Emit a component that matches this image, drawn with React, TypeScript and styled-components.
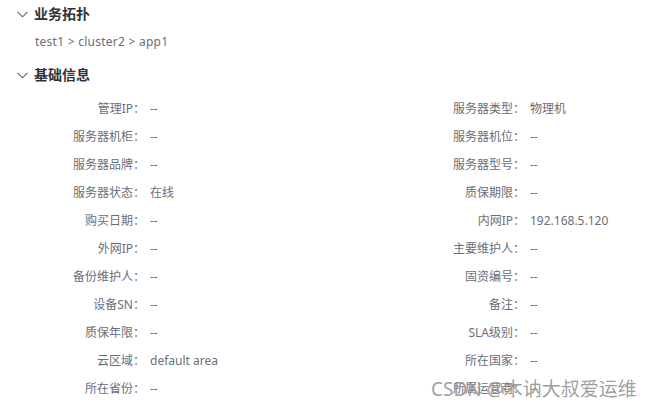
import styled, { createGlobalStyle } from 'styled-components';

const GlobalStyle = createGlobalStyle`
  html, body {
    margin: 0;
    padding: 0;
    background: #ffffff;
  }
  body {
    font-family: "Noto Sans", "Noto Sans CJK SC", sans-serif;
    font-size: 12px;
    color: #63656e;
  }
`;

const FONT_STACK = `"Noto Sans", "Noto Sans CJK SC", sans-serif`;

const Page = styled.div`
  position: relative;
  width: 658px;
  height: 407px;
  overflow: hidden;
  padding: 4px 0 0 17px;
  box-sizing: border-box;
`;

const SectionHeader = styled.div<{ $gap?: number }>`
  display: flex;
  align-items: center;
  gap: 6px;
  height: 20px;
  margin-top: ${(p) => p.$gap ?? 0}px;
  font-family: ${FONT_STACK};
  font-size: 14px;
  font-weight: 700;
  color: #313238;
  line-height: 20px;
`;

const Chevron = styled.svg`
  width: 11px;
  height: 7px;
  flex: none;
`;

const Breadcrumb = styled.div`
  margin-top: 8px;
  padding-left: 18px;
  height: 20px;
  line-height: 20px;
  font-size: 12px;
  letter-spacing: 0.25px;
  color: #6b6d76;
`;

const InfoGrid = styled.div`
  display: grid;
  grid-template-columns: 380px 1fr;
  grid-auto-rows: 28px;
  margin-top: 10px;
  margin-left: 3px;
`;

const Field = styled.div`
  display: flex;
  align-items: center;
  font-size: 12px;
  line-height: 16px;
`;

const Label = styled.span`
  width: 125px;
  flex: none;
  text-align: right;
  color: #6b6d76;
  white-space: nowrap;
`;

const Value = styled.span`
  padding-left: 5px;
  color: #6b6d76;
  white-space: nowrap;
`;

const Watermark = styled.div`
  position: absolute;
  left: 431px;
  top: 376px;
  font-family: ${FONT_STACK};
  font-size: 19px;
  line-height: 26px;
  color: rgba(120, 120, 120, 0.72);
  text-shadow: 0 0 1px rgba(255, 255, 255, 0.6);
  white-space: nowrap;
  pointer-events: none;
`;

const fields: [string, string][] = [
  ['管理IP', '--'],
  ['服务器类型', '物理机'],
  ['服务器机柜', '--'],
  ['服务器机位', '--'],
  ['服务器品牌', '--'],
  ['服务器型号', '--'],
  ['服务器状态', '在线'],
  ['质保期限', '--'],
  ['购买日期', '--'],
  ['内网IP', '192.168.5.120'],
  ['外网IP', '--'],
  ['主要维护人', '--'],
  ['备份维护人', '--'],
  ['固资编号', '--'],
  ['设备SN', '--'],
  ['备注', '--'],
  ['质保年限', '--'],
  ['SLA级别', '--'],
  ['云区域', 'default area'],
  ['所在国家', '--'],
  ['所在省份', '--'],
  ['所属运营商', '--'],
];

function DownIcon() {
  return (
    <Chevron viewBox="0 0 11 7">
      <path d="M0.5 0.8 L5.5 5.8 L10.5 0.8" fill="none" stroke="#63656e" strokeWidth="1.1" />
    </Chevron>
  );
}

export default function App() {
  return (
    <>
      <GlobalStyle />
      <Page>
        <SectionHeader>
          <DownIcon />
          业务拓扑
        </SectionHeader>
        <Breadcrumb>test1 &gt; cluster2 &gt; app1</Breadcrumb>
        <SectionHeader $gap={13}>
          <DownIcon />
          基础信息
        </SectionHeader>
        <InfoGrid>
          {fields.map(([label, value]) => (
            <Field key={label}>
              <Label>{label}：</Label>
              <Value>{value}</Value>
            </Field>
          ))}
        </InfoGrid>
        <Watermark>CSDN @木讷大叔爱运维</Watermark>
      </Page>
    </>
  );
}
